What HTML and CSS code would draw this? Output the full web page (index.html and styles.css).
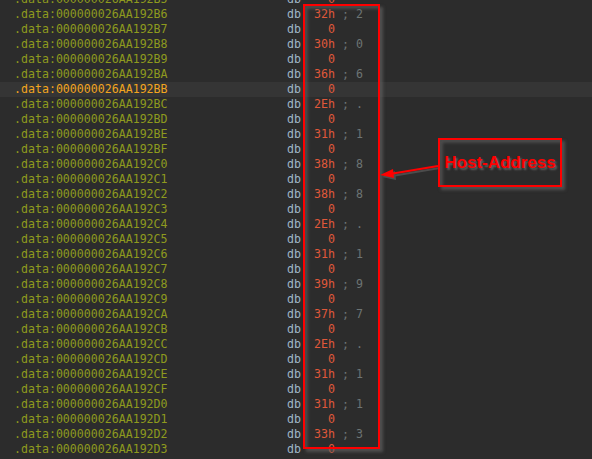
FILE: index.html
```html
<!DOCTYPE html>
<html lang="en">
<head>
    <meta charset="UTF-8">
    <title>IDA View - .data</title>
    <link rel="stylesheet" href="styles.css">
</head>
<body>

    <div class="listing">
        <div class="row"><span class="addr">.data:000000026AA192B5</span><span class="op">db</span><span class="val">0</span></div>
        <div class="row"><span class="addr">.data:000000026AA192B6</span><span class="op">db</span><span class="val">32h</span><span class="cmt">; 2</span></div>
        <div class="row"><span class="addr">.data:000000026AA192B7</span><span class="op">db</span><span class="val">0</span></div>
        <div class="row"><span class="addr">.data:000000026AA192B8</span><span class="op">db</span><span class="val">30h</span><span class="cmt">; 0</span></div>
        <div class="row"><span class="addr">.data:000000026AA192B9</span><span class="op">db</span><span class="val">0</span></div>
        <div class="row"><span class="addr">.data:000000026AA192BA</span><span class="op">db</span><span class="val">36h</span><span class="cmt">; 6</span></div>
        <div class="row current"><span class="addr">.data:000000026AA192BB</span><span class="op">db</span><span class="val">0</span></div>
        <div class="row"><span class="addr">.data:000000026AA192BC</span><span class="op">db</span><span class="val">2Eh</span><span class="cmt">; .</span></div>
        <div class="row"><span class="addr">.data:000000026AA192BD</span><span class="op">db</span><span class="val">0</span></div>
        <div class="row"><span class="addr">.data:000000026AA192BE</span><span class="op">db</span><span class="val">31h</span><span class="cmt">; 1</span></div>
        <div class="row"><span class="addr">.data:000000026AA192BF</span><span class="op">db</span><span class="val">0</span></div>
        <div class="row"><span class="addr">.data:000000026AA192C0</span><span class="op">db</span><span class="val">38h</span><span class="cmt">; 8</span></div>
        <div class="row"><span class="addr">.data:000000026AA192C1</span><span class="op">db</span><span class="val">0</span></div>
        <div class="row"><span class="addr">.data:000000026AA192C2</span><span class="op">db</span><span class="val">38h</span><span class="cmt">; 8</span></div>
        <div class="row"><span class="addr">.data:000000026AA192C3</span><span class="op">db</span><span class="val">0</span></div>
        <div class="row"><span class="addr">.data:000000026AA192C4</span><span class="op">db</span><span class="val">2Eh</span><span class="cmt">; .</span></div>
        <div class="row"><span class="addr">.data:000000026AA192C5</span><span class="op">db</span><span class="val">0</span></div>
        <div class="row"><span class="addr">.data:000000026AA192C6</span><span class="op">db</span><span class="val">31h</span><span class="cmt">; 1</span></div>
        <div class="row"><span class="addr">.data:000000026AA192C7</span><span class="op">db</span><span class="val">0</span></div>
        <div class="row"><span class="addr">.data:000000026AA192C8</span><span class="op">db</span><span class="val">39h</span><span class="cmt">; 9</span></div>
        <div class="row"><span class="addr">.data:000000026AA192C9</span><span class="op">db</span><span class="val">0</span></div>
        <div class="row"><span class="addr">.data:000000026AA192CA</span><span class="op">db</span><span class="val">37h</span><span class="cmt">; 7</span></div>
        <div class="row"><span class="addr">.data:000000026AA192CB</span><span class="op">db</span><span class="val">0</span></div>
        <div class="row"><span class="addr">.data:000000026AA192CC</span><span class="op">db</span><span class="val">2Eh</span><span class="cmt">; .</span></div>
        <div class="row"><span class="addr">.data:000000026AA192CD</span><span class="op">db</span><span class="val">0</span></div>
        <div class="row"><span class="addr">.data:000000026AA192CE</span><span class="op">db</span><span class="val">31h</span><span class="cmt">; 1</span></div>
        <div class="row"><span class="addr">.data:000000026AA192CF</span><span class="op">db</span><span class="val">0</span></div>
        <div class="row"><span class="addr">.data:000000026AA192D0</span><span class="op">db</span><span class="val">31h</span><span class="cmt">; 1</span></div>
        <div class="row"><span class="addr">.data:000000026AA192D1</span><span class="op">db</span><span class="val">0</span></div>
        <div class="row"><span class="addr">.data:000000026AA192D2</span><span class="op">db</span><span class="val">33h</span><span class="cmt">; 3</span></div>
        <div class="row"><span class="addr">.data:000000026AA192D3</span><span class="op">db</span><span class="val">0</span></div>
    </div>

    <!-- annotation drawn over the listing -->
    <div class="mark-column"></div>
    <svg class="mark-arrow" width="60" height="16" viewBox="0 0 60 16">
        <g transform="translate(2 2)" fill="#5a5a5a" stroke="#5a5a5a" opacity="0.7">
            <line x1="58" y1="1" x2="10" y2="9" stroke-width="2"/>
            <polygon points="0,10 13,4 14,13" stroke="none"/>
        </g>
        <line x1="58" y1="1" x2="10" y2="9" stroke="#ff0000" stroke-width="2"/>
        <polygon points="0,10 13,4 14,13" fill="#ff0000"/>
    </svg>
    <div class="mark-label">Host-Address</div>

</body>
</html>
```

FILE: styles.css
```css
body {
    margin: 0;
    background-color: #2c2c2c;
    font-family: "DejaVu Sans Mono", "Liberation Mono", monospace;
    font-size: 11.6px;
    overflow: hidden;
    height: 459px;
}

.listing {
    margin-top: -8px;
}

.row {
    display: flex;
    height: 15px;
    line-height: 15px;
    padding-left: 14px;
    white-space: pre;
}

.row.current {
    background-color: #353535;
}

.addr {
    width: 273px;
    color: #8e9a1e;
}

.row.current .addr {
    color: #f2a51e;
}

.op {
    width: 27px;
    color: #9fb6c6;
}

.val {
    width: 21px;
    text-align: right;
    color: #e0583a;
}

.cmt {
    margin-left: 7px;
    color: #6c7474;
}

.mark-column {
    position: absolute;
    left: 303px;
    top: 4px;
    width: 73px;
    height: 441px;
    border: 2px solid #ff0000;
    box-shadow: 3px 3px 3px rgba(95, 95, 95, 0.7), inset 3px 3px 3px rgba(95, 95, 95, 0.6);
}

.mark-arrow {
    position: absolute;
    left: 380px;
    top: 165px;
}

.mark-label {
    position: absolute;
    left: 438px;
    top: 138px;
    width: 120px;
    height: 45px;
    border: 2px solid #ff0000;
    box-shadow: 3px 3px 3px rgba(95, 95, 95, 0.7), inset 3px 3px 3px rgba(95, 95, 95, 0.6);
    display: flex;
    align-items: center;
    justify-content: center;
    font-family: "Liberation Sans", Arial, sans-serif;
    font-weight: bold;
    font-size: 17px;
    color: #ff0000;
    text-shadow: 2px 2px 2px rgba(110, 110, 110, 0.8);
}
```
